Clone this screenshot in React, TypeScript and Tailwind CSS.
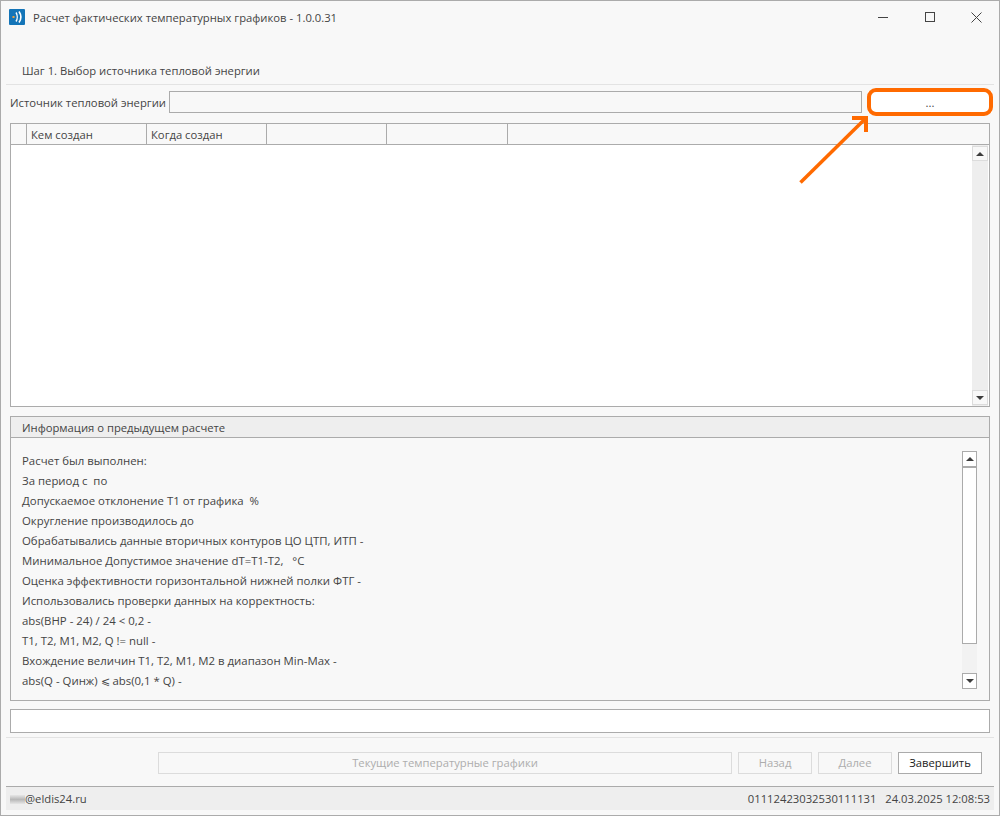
import React from 'react';

const font = { fontFamily: '"Open Sans", "Noto Sans", sans-serif' };

const infoLines = [
  'Расчет был выполнен:',
  'За период с  по',
  'Допускаемое отклонение Т1 от графика  %',
  'Округление производилось до',
  'Обрабатывались данные вторичных контуров ЦО ЦТП, ИТП -',
  'Минимальное Допустимое значение dT=T1-T2,   °C',
  'Оценка эффективности горизонтальной нижней полки ФТГ -',
  'Использовались проверки данных на корректность:',
  'abs(ВНР - 24) / 24 < 0,2 -',
  'T1, T2, M1, M2, Q != null -',
  'Вхождение величин T1, T2, M1, M2 в диапазон Min-Max -',
  'abs(Q - Qинж) ⩽ abs(0,1 * Q) -',
];

const Caret = ({ down }: { down?: boolean }) => (
  <svg width="8" height="4" viewBox="0 0 8 4" className="block">
    <path d={down ? 'M0 0H8L4 4Z' : 'M0 4H8L4 0Z'} fill="#3c3c3c" />
  </svg>
);

const Logo = () => (
  <svg width="16" height="16" viewBox="0 0 16 16" className="block">
    <rect width="16" height="16" rx="1" fill="#1475b8" />
    <rect x="3.5" y="7" width="2" height="2" fill="#f0a040" />
    <path d="M7 3.5C8.6 6 8.6 10 7 12.5" stroke="#fff" strokeWidth="1.4" fill="none" />
    <path d="M10 2.5C12.4 6 12.4 10 10 13.5" stroke="#fff" strokeWidth="1.6" fill="none" />
  </svg>
);

const WindowButtons = () => (
  <div className="flex items-center h-full">
    <div className="w-[47px] flex justify-center">
      <div className="w-[10px] h-px bg-[#444444]" />
    </div>
    <div className="w-[47px] flex justify-center">
      <div className="w-[10px] h-[10px] border border-[#444444]" />
    </div>
    <div className="w-[46px] flex justify-center">
      <svg width="11" height="11" viewBox="0 0 11 11">
        <path d="M0.5 0.5L10.5 10.5M10.5 0.5L0.5 10.5" stroke="#444444" strokeWidth="1" />
      </svg>
    </div>
  </div>
);

const WizardButton = ({ children, className, enabled }: { children: React.ReactNode; className: string; enabled?: boolean }) => (
  <div
    className={
      'h-[22px] flex items-center justify-center ' +
      (enabled ? 'border border-[#ababab] bg-white text-[#222222] ' : 'border border-[#dcdcdc] text-[#adadad] ') +
      className
    }
  >
    {children}
  </div>
);

export default function App() {
  return (
    <div
      className="relative w-[1000px] h-[816px] bg-[#f8f8f8] border border-[#ababab] flex flex-col text-[11.25px] text-[#444444] overflow-hidden"
      style={font}
    >
      {/* title bar */}
      <div className="h-[36px] shrink-0 flex items-center justify-between pl-2 pb-1">
        <div className="flex items-center gap-2">
          <Logo />
          <span className="pt-[2px]">Расчет фактических температурных графиков - 1.0.0.31</span>
        </div>
        <WindowButtons />
      </div>

      <div className="flex-1 flex flex-col px-[5px] min-h-0">
        {/* step header */}
        <div className="h-[48px] shrink-0 flex items-end pl-4 pb-1 border-b border-[#e3e3e3]">
          Шаг 1. Выбор источника тепловой энергии
        </div>

        {/* source row */}
        <div className="h-[38px] shrink-0 flex items-start pl-1 pt-[6px]">
          <span className="w-[159px] h-[22px] pt-[2px] flex items-center whitespace-nowrap">Источник тепловой энергии</span>
          <div className="w-[693px] h-[22px] border border-[#ababab] bg-[#f8f8f8]" />
          <div className="w-[124px] h-[22px] ml-[6px] pt-[3px] bg-white flex items-center justify-center text-[#444444]">...</div>
        </div>

        {/* table */}
        <div className="mx-1 h-[284px] shrink-0 border border-[#ababab] bg-white flex flex-col">
          <div className="h-[21px] shrink-0 flex bg-[#f8f8f8] border-b border-[#ababab]">
            <div className="w-[16px] border-r border-[#ababab]" />
            <div className="w-[120px] border-r border-[#ababab] pl-1 pt-[2px] flex items-center">Кем создан</div>
            <div className="w-[120px] border-r border-[#ababab] pl-1 pt-[2px] flex items-center">Когда создан</div>
            <div className="w-[120px] border-r border-[#ababab]" />
            <div className="w-[121px] border-r border-[#ababab]" />
          </div>
          <div className="flex-1 flex justify-end min-h-0">
            <div className="w-[16px] mr-px bg-[#eeeeee] flex flex-col justify-between py-px">
              <div className="h-[15px] border border-[#dcdcdc] bg-[#f8f8f8] flex items-center justify-center">
                <Caret />
              </div>
              <div className="h-[15px] border border-[#dcdcdc] bg-[#f8f8f8] flex items-center justify-center">
                <Caret down />
              </div>
            </div>
          </div>
        </div>

        {/* previous calculation info */}
        <div className="mx-1 mt-[9px] h-[285px] shrink-0 border border-[#ababab] flex flex-col">
          <div className="h-[21px] shrink-0 bg-[#eeeeee] border-b border-[#ababab] pl-[11px] pt-[2px] flex items-center">
            Информация о предыдущем расчете
          </div>
          <div className="flex-1 flex justify-between min-h-0 pl-[11px] pr-3 pt-[13px]">
            <div className="flex flex-col text-[11.4px]">
              {infoLines.map((line) => (
                <div key={line} className="h-[20px] flex items-center whitespace-pre">
                  {line}
                </div>
              ))}
            </div>
            <div className="w-[15px] h-[238px] flex flex-col bg-[#f2f2f2]">
              <div className="h-[16px] border border-[#ababab] bg-white flex items-center justify-center shrink-0">
                <Caret />
              </div>
              <div className="h-[177px] border border-[#ababab] bg-white shrink-0" />
              <div className="flex-1" />
              <div className="h-[16px] border border-[#ababab] bg-white flex items-center justify-center shrink-0">
                <Caret down />
              </div>
            </div>
          </div>
        </div>

        <div className="mx-1 mt-2 h-[24px] shrink-0 border border-[#ababab] bg-white" />
        <div className="mt-1 shrink-0 border-b border-[#e3e3e3]" />

        {/* wizard buttons */}
        <div className="h-[48px] shrink-0 flex items-center pl-[152px] pt-[2px]">
          <WizardButton className="w-[574px]">Текущие температурные графики</WizardButton>
          <WizardButton className="w-[74px] ml-[6px]">Назад</WizardButton>
          <WizardButton className="w-[74px] ml-[6px]">Далее</WizardButton>
          <WizardButton className="w-[84px] ml-[6px]" enabled>
            Завершить
          </WizardButton>
        </div>

        {/* status bar */}
        <div className="h-[24px] shrink-0 bg-[#eeeeee] border-t border-[#ababab] flex items-center justify-between px-1 pt-[2px]">
          <div className="flex items-center">
            <div className="w-[15px] h-[9px] bg-gradient-to-b from-[#e4e4e4] via-[#aaaaaa] to-[#e4e4e4] opacity-80" />
            <span>@eldis24.ru</span>
          </div>
          <div className="whitespace-pre">01112423032530111131   24.03.2025 12:08:53</div>
        </div>
        <div className="h-[5px] shrink-0" />
      </div>

      {/* orange annotation drawn over the window */}
      <div className="absolute left-[866px] top-[87px] w-[126px] h-[28px] rounded-[9px] border-[4px] border-[#ff6a00]" />
      <svg className="absolute left-0 top-0 pointer-events-none" width="1000" height="816" viewBox="0 0 1000 816">
        <path d="M799.5 181.5L864 118" stroke="#ff6a00" strokeWidth="3.5" fill="none" />
        <path d="M851 117H865V131" stroke="#ff6a00" strokeWidth="4" fill="none" />
      </svg>
    </div>
  );
}
